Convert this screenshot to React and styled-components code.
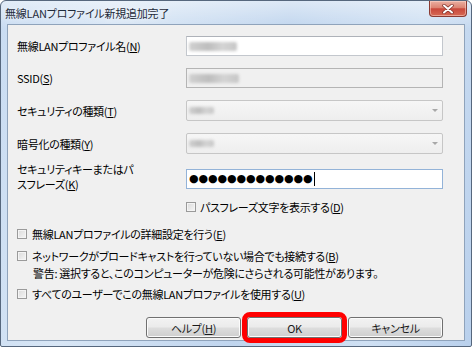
import React from 'react'
import styled, { createGlobalStyle } from 'styled-components'

const GlobalStyle = createGlobalStyle`
  html, body {
    margin: 0;
    padding: 0;
  }
  body {
    width: 472px;
    height: 347px;
    overflow: hidden;
    background: #ffffff;
    font-family: "Noto Sans CJK JP", "Noto Sans", sans-serif;
    font-feature-settings: "palt";
    color: #000;
  }
`

const Window = styled.div`
  width: 472px;
  height: 347px;
  box-sizing: border-box;
  border: 1px solid #56677d;
  border-radius: 6px 6px 2px 2px;
  padding: 0 6px 5px 6px;
  display: flex;
  flex-direction: column;
  background:
    linear-gradient(180deg, rgba(255, 255, 255, 0.45), rgba(255, 255, 255, 0) 28px),
    linear-gradient(100deg, #c9dcf2 0%, #d8e6f5 22%, #c0d5ee 55%, #cfe0f3 80%, #b9d0ec 100%);
`

const TitleBar = styled.div`
  height: 23px;
  margin: 0 -6px;
  padding: 0 4px;
  display: flex;
  justify-content: space-between;
  align-items: center;
`

const Title = styled.div`
  font-size: 11px;
  line-height: 14px;
  letter-spacing: -0.2px;
  color: #1e2a3a;
  text-shadow: 0 0 6px rgba(255, 255, 255, 0.9);
`

const CloseButton = styled.div`
  align-self: flex-start;
  width: 38px;
  height: 16px;
  box-sizing: border-box;
  border: 1px solid #8a3a32;
  border-top: none;
  border-radius: 0 0 4px 4px;
  display: flex;
  align-items: center;
  justify-content: center;
  background: linear-gradient(180deg, #eab0a2 0%, #dc8372 45%, #c9483b 52%, #d66a55 100%);
  box-shadow: inset 0 0 0 1px rgba(255, 220, 210, 0.5);
`

const Client = styled.div`
  flex: 1;
  border: 1px solid #8fa3bb;
  background: #f0f0f0;
  padding: 11px 21px 0 9px;
  display: flex;
  flex-direction: column;
  font-size: 11px;
  line-height: 14px;
  letter-spacing: -0.3px;
`

const FormGrid = styled.div`
  display: grid;
  grid-template-columns: 169px 257px;
  row-gap: 12px;
  align-items: center;
`

const Label = styled.div`
  align-self: ${p => (p.$top ? 'start' : 'center')};
  margin-top: ${p => (p.$top ? '-4px' : '0')};
  line-height: ${p => (p.$top ? '15px' : '14px')};
`

const TextBox = styled.div`
  height: 20px;
  box-sizing: border-box;
  border: 1px solid #c3c7cd;
  border-top-color: #aeb2b9;
  background: ${p => (p.$disabled ? '#f0f0f0' : '#ffffff')};
  ${p => p.$disabled && 'border-color: #b4b4b4;'}
  ${p => p.$focused && 'border-color: #93b3d8;'}
  display: flex;
  align-items: center;
  padding-left: 2px;
`

const Select = styled.div`
  height: 21px;
  box-sizing: border-box;
  border: 1px solid #c6c6c6;
  border-radius: 2px;
  background: linear-gradient(180deg, #f6f6f6, #eeeeee);
  display: flex;
  align-items: center;
  justify-content: space-between;
  padding: 0 4px 0 2px;
`

const Arrow = styled.span`
  width: 0;
  height: 0;
  border-left: 3px solid transparent;
  border-right: 3px solid transparent;
  border-top: 3px solid #a8a8a8;
`

const Blur = styled.span`
  display: inline-block;
  width: ${p => p.$w}px;
  height: ${p => p.$h || 8}px;
  border-radius: 2px;
  background: linear-gradient(90deg, #d0d0d0, #bdbdbd 40%, #d4d4d4 70%, #c6c6c6);
  filter: blur(1.4px);
`

const Dots = styled.span`
  font-family: "DejaVu Sans", sans-serif;
  font-size: 11px;
  letter-spacing: -0.1px;
  line-height: 14px;
  color: #000;
`

const Caret = styled.span`
  display: inline-block;
  width: 1px;
  height: 14px;
  background: #000;
  margin-left: 2px;
`

const CheckRow = styled.div`
  display: flex;
  align-items: center;
  gap: ${p => p.$gap || 5}px;
  margin-top: ${p => p.$mt || 0}px;
  padding-left: ${p => p.$indent || 0}px;
`

const Box = styled.span`
  width: 10px;
  height: 10px;
  box-sizing: border-box;
  border: 1px solid #9a9a9a;
  background: linear-gradient(135deg, #dadada, #f6f6f6);
  box-shadow: inset 0 0 0 1px #f4f4f4;
  flex-shrink: 0;
`

const Warning = styled.div`
  margin-top: ${p => p.$mt}px;
  padding-left: 16px;
`

const ButtonRow = styled.div`
  display: flex;
  justify-content: flex-end;
  gap: 6px;
  margin-top: 16px;
`

const Button = styled.div`
  width: 95px;
  height: 21px;
  box-sizing: border-box;
  border: 1px solid #707070;
  border-radius: 3px;
  background: linear-gradient(180deg, #f2f2f2 0%, #ebebeb 48%, #dddddd 52%, #cfcfcf 100%);
  box-shadow: inset 0 0 0 1px #fbfbfb;
  display: flex;
  align-items: center;
  justify-content: center;
  color: #1a1a1a;
  ${p => p.$highlight && 'outline: 5px solid #ff0000; outline-offset: 0;'}
`

const CloseIcon = () => (
  <svg width="14" height="10" viewBox="0 0 14 10">
    <path d="M3 1.5 L11 8.5 M11 1.5 L3 8.5" stroke="#7a2c25" strokeWidth="3.4" strokeLinecap="round" />
    <path d="M3 1.5 L11 8.5 M11 1.5 L3 8.5" stroke="#ffffff" strokeWidth="2" strokeLinecap="round" />
  </svg>
)

export default function App() {
  return (
    <>
      <GlobalStyle />
      <Window>
        <TitleBar>
          <Title>無線LANプロファイル新規追加完了</Title>
          <CloseButton>
            <CloseIcon />
          </CloseButton>
        </TitleBar>
        <Client>
          <FormGrid>
            <Label>無線LANプロファイル名(<u>N</u>)</Label>
            <TextBox>
              <Blur $w={48} $h={9} />
            </TextBox>

            <Label>SSID(<u>S</u>)</Label>
            <TextBox $disabled>
              <Blur $w={50} $h={9} />
            </TextBox>

            <Label>セキュリティの種類(<u>T</u>)</Label>
            <Select>
              <Blur $w={25} $h={7} />
              <Arrow />
            </Select>

            <Label>暗号化の種類(<u>Y</u>)</Label>
            <Select>
              <Blur $w={25} $h={7} />
              <Arrow />
            </Select>

            <Label $top>
              セキュリティキーまたはパ
              <br />
              スフレーズ(<u>K</u>)
            </Label>
            <TextBox $focused>
              <Dots>●●●●●●●●●●●●●</Dots>
              <Caret />
            </TextBox>
          </FormGrid>

          <CheckRow $indent={169} $gap={4} $mt={8}>
            <Box />
            <span>パスフレーズ文字を表示する(<u>D</u>)</span>
          </CheckRow>

          <CheckRow $mt={13}>
            <Box />
            <span>無線LANプロファイルの詳細設定を行う(<u>E</u>)</span>
          </CheckRow>
          <CheckRow $mt={8}>
            <Box />
            <span>ネットワークがブロードキャストを行っていない場合でも接続する(<u>B</u>)</span>
          </CheckRow>
          <Warning $mt={3}>警告: 選択すると、このコンピューターが危険にさらされる可能性があります。</Warning>
          <CheckRow $mt={7}>
            <Box />
            <span>すべてのユーザーでこの無線LANプロファイルを使用する(<u>U</u>)</span>
          </CheckRow>

          <ButtonRow>
            <Button>ヘルプ(<u>H</u>)</Button>
            <Button $highlight>OK</Button>
            <Button>キャンセル</Button>
          </ButtonRow>
        </Client>
      </Window>
    </>
  )
}
